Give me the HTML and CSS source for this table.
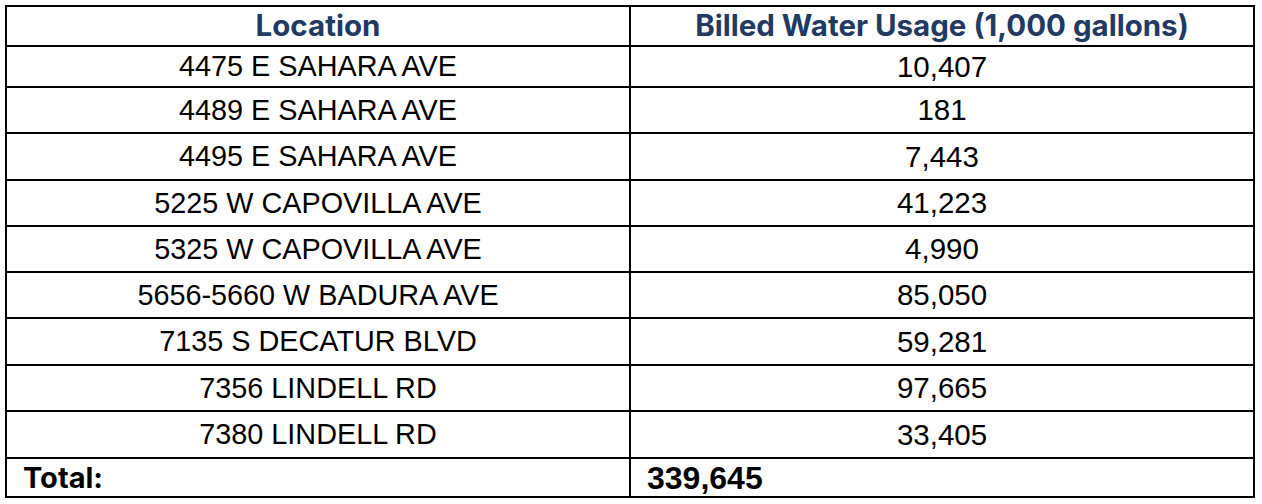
FILE: index.html
```html
<!DOCTYPE html>
<html>
<head>
<meta charset="utf-8">
<link rel="stylesheet" href="styles.css">
</head>
<body>
<table class="usage">
  <colgroup><col class="c1"><col class="c2"></colgroup>
  <thead>
    <tr class="head"><th>Location</th><th>Billed Water Usage (1,000 gallons)</th></tr>
  </thead>
  <tbody>
    <tr class="first"><td>4475 E SAHARA AVE</td><td class="num">10,407</td></tr>
    <tr><td>4489 E SAHARA AVE</td><td class="num">181</td></tr>
    <tr class="tall"><td>4495 E SAHARA AVE</td><td class="num">7,443</td></tr>
    <tr><td>5225 W CAPOVILLA AVE</td><td class="num">41,223</td></tr>
    <tr><td>5325 W CAPOVILLA AVE</td><td class="num">4,990</td></tr>
    <tr><td>5656-5660 W BADURA AVE</td><td class="num">85,050</td></tr>
    <tr class="tall"><td>7135 S DECATUR BLVD</td><td class="num">59,281</td></tr>
    <tr><td>7356 LINDELL RD</td><td class="num">97,665</td></tr>
    <tr class="tall"><td>7380 LINDELL RD</td><td class="num">33,405</td></tr>
    <tr class="total"><td class="label">Total:</td><td class="sum">339,645</td></tr>
  </tbody>
</table>
</body>
</html>
```
FILE: styles.css
```css
html, body {
  margin: 0;
  background: #ffffff;
}
body {
  padding: 5px 0 0 5px;
}
.usage {
  border-collapse: collapse;
  width: 1250px;
  table-layout: fixed;
  font-family: "Liberation Sans", Arial, sans-serif;
  color: #000;
}
.c1, .c2 { width: 50%; }
.usage th, .usage td {
  border: 2px solid #000;
  padding: 0;
  text-align: center;
  vertical-align: middle;
  line-height: 1;
}
.usage th {
  font-family: "Inter", "Liberation Sans", sans-serif;
  font-weight: 700;
  font-size: 29.5px;
  color: #1f3a63;
  height: 38px;
}
.usage td {
  font-size: 28.8px;
  height: 44px;
}
.usage td.num {
  font-size: 29.5px;
}
.usage tr.first td { height: 39px; }
.usage tr.tall td { height: 45px; }
.usage tr.total td {
  height: 37px;
  text-align: left;
  padding-left: 16px;
  font-weight: 700;
}
.usage td.label {
  font-family: "Inter", "Liberation Sans", sans-serif;
  font-size: 29px;
}
.usage td.sum {
  font-size: 32px;
}
```
